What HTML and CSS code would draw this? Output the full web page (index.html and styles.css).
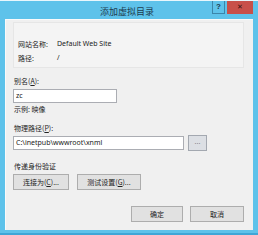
FILE: index.html
```html
<!DOCTYPE html>
<html>
<head>
<meta charset="utf-8">
<link rel="stylesheet" href="styles.css">
</head>
<body>
<div class="window">
  <div class="titlebar">
    <div class="spacer"></div>
    <span class="title">添加虚拟目录</span>
    <div class="controls">
      <div class="help">?</div>
      <div class="close">✕</div>
    </div>
  </div>
  <div class="client">
    <div class="info">
      <div class="info-row"><span class="info-label">网站名称:</span><span class="lat">Default Web Site</span></div>
      <div class="info-row"><span class="info-label">路径:</span><span class="lat">/</span></div>
    </div>
    <div class="label l-alias">别名(<u>A</u>):</div>
    <div class="input alias lat">zc</div>
    <div class="label l-example">示例: 映像</div>
    <div class="label l-path">物理路径(<u>P</u>):</div>
    <div class="path-row">
      <div class="input path lat">C:\inetpub\wwwroot\xnml</div>
      <div class="browse">...</div>
    </div>
    <div class="label l-auth">传递身份验证</div>
    <div class="auth-row">
      <div class="btn b-connect">连接为(<u>C</u>)...</div>
      <div class="btn b-test">测试设置(<u>G</u>)...</div>
    </div>
    <div class="footer">
      <div class="btn b-ok">确定</div>
      <div class="btn b-cancel">取消</div>
    </div>
  </div>
</div>
</body>
</html>
```
FILE: styles.css
```css
html, body {
  margin: 0;
  padding: 0;
  background: #ffffff;
  overflow: hidden;
}
.window {
  width: 258px;
  height: 235px;
  background-color: #5ec2ea;
  display: flex;
  flex-direction: column;
  box-sizing: border-box;
  border-top: 1px solid #e8f6fc;
  border-bottom: 2px solid #3fa6d6;
  font-family: "Noto Sans CJK SC", "Noto Sans", sans-serif;
  color: #222222;
}
.titlebar {
  height: 18px;
  display: grid;
  grid-template-columns: 1fr auto 1fr;
  align-items: start;
}
.title {
  font-size: 9px;
  line-height: 12px;
  color: #1d3c50;
  margin-top: 5px;
  margin-left: -4px;
}
.controls {
  justify-self: end;
  margin-right: 5px;
  display: flex;
  gap: 2px;
}
.help {
  width: 13px;
  height: 13px;
  box-sizing: border-box;
  border: 1px solid #3c86aa;
  border-top: none;
  background-color: #5ec2ea;
  font-family: "Liberation Sans", sans-serif;
  font-weight: bold;
  font-size: 8px;
  line-height: 12px;
  text-align: center;
  color: #1b3648;
}
.close {
  width: 26px;
  height: 13px;
  background: #c8504a;
  font-family: "DejaVu Sans", sans-serif;
  font-weight: bold;
  font-size: 7px;
  line-height: 12px;
  text-align: center;
  color: #3a1412;
}
.client {
  flex: 1;
  margin: 0 5px 3px 5px;
  background: #f0f0f0;
  border-top: 1px solid #fafafa;
  border-left: 1px solid #fafafa;
  padding: 2px 9px 0 7px;
  box-sizing: border-box;
  display: flex;
  flex-direction: column;
  font-size: 7px;
}
.lat {
  font-family: "Noto Sans", "Noto Sans CJK SC", sans-serif;
}
.info {
  height: 46px;
  box-sizing: border-box;
  background: #f4f4f4;
  border: 1px solid #e6e6e6;
  padding: 16px 0 0 4px;
  display: flex;
  flex-direction: column;
  gap: 4px;
}
.info-row {
  display: flex;
  height: 10px;
  line-height: 10px;
  font-size: 7px;
}
.info-label {
  width: 39px;
}
.label {
  height: 10px;
  line-height: 10px;
  padding-left: 1px;
}
.label u {
  text-decoration: underline;
}
.l-alias { margin-top: 8px; }
.input {
  height: 14px;
  box-sizing: border-box;
  background: #ffffff;
  border: 1px solid #abadb3;
  line-height: 12px;
  padding-left: 2px;
  font-size: 7px;
}
.alias {
  width: 104px;
  margin-top: 3px;
}
.l-example { margin-top: 1px; }
.l-path { margin-top: 9px; }
.path-row {
  margin-top: 2px;
  height: 16px;
  display: flex;
  align-items: center;
  gap: 3px;
}
.path {
  width: 171px;
}
.browse {
  width: 19px;
  height: 16px;
  box-sizing: border-box;
  background: #dcdfe4;
  border: 1px solid #a3a8b0;
  margin-left: 1px;
  font-family: "Liberation Sans", sans-serif;
  font-size: 7px;
  line-height: 11px;
  text-align: center;
  color: #555;
}
.l-auth { margin-top: 10px; }
.auth-row {
  margin-top: 3px;
  display: flex;
  gap: 8px;
}
.btn {
  height: 16px;
  box-sizing: border-box;
  background: #e1e1e1;
  border: 1px solid #adadad;
  line-height: 14px;
  text-align: center;
  font-size: 7px;
}
.btn u { text-decoration: underline; }
.b-connect { width: 56px; }
.b-test { width: 64px; }
.footer {
  margin-top: 16px;
  display: flex;
  justify-content: flex-end;
  gap: 7px;
}
.b-ok { width: 52px; }
.b-cancel { width: 54px; }
```
